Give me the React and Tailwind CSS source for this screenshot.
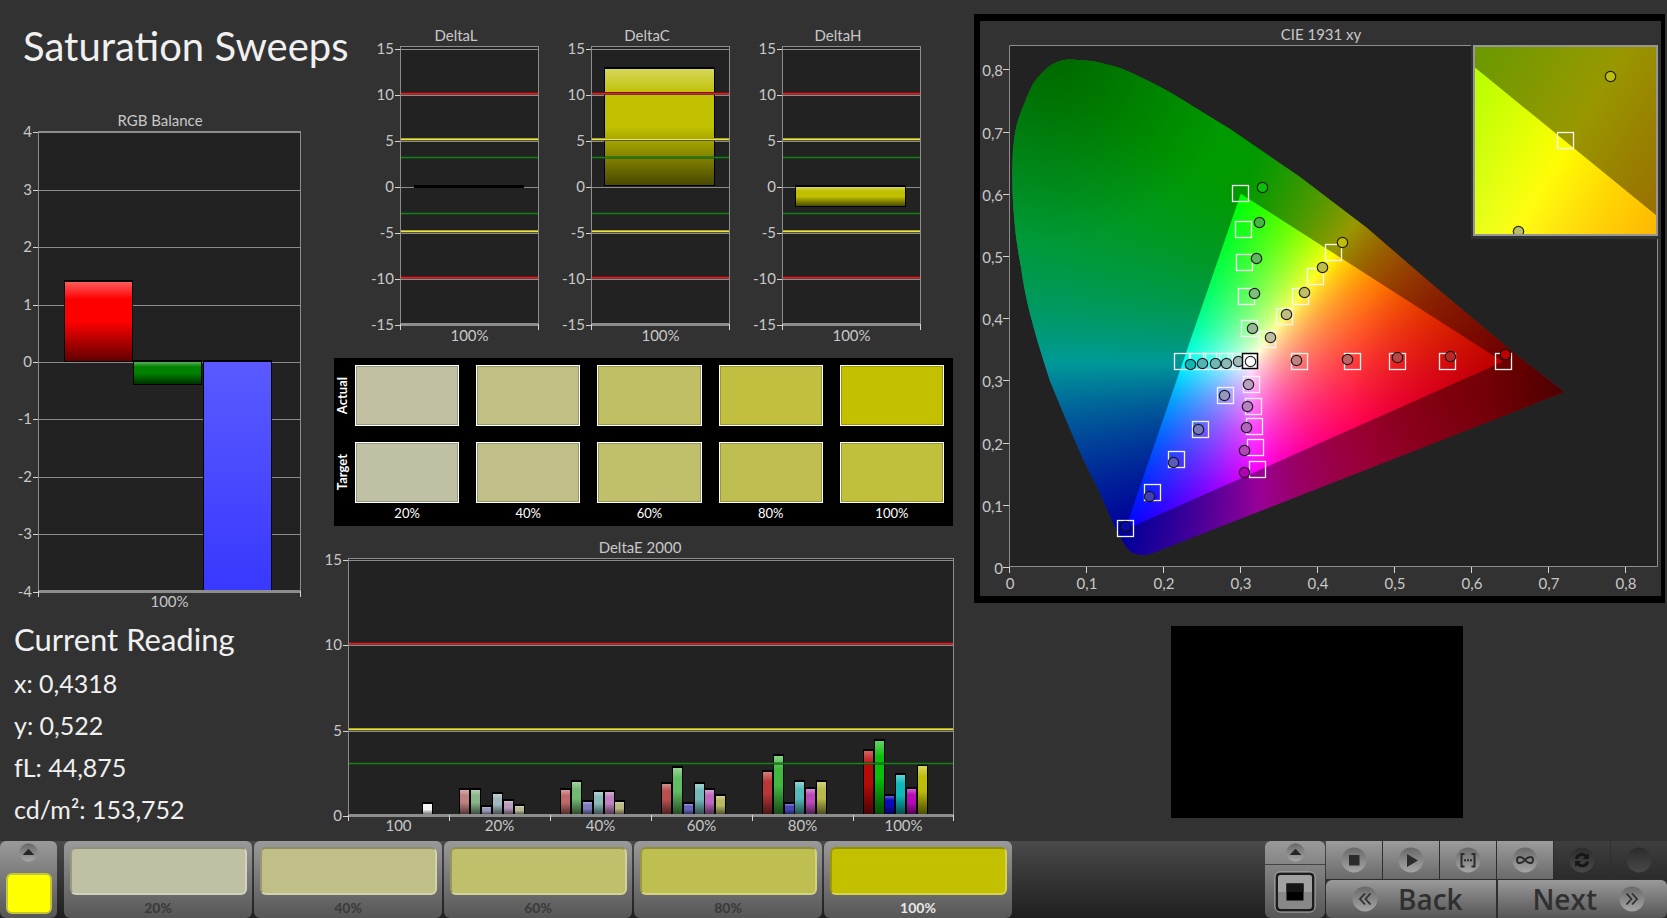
import React, { useState } from 'react';

const LEVELS = ['20%', '40%', '60%', '80%', '100%'];
const ACTUAL = ['#c1c0a2', '#c0bf84', '#c1bf64', '#c2bf40', '#c3c000'];
const TARGET = ['#bfc0a4', '#c0bf88', '#bfbf6c', '#bebf50', '#c0c03c'];

const DELTA_TICKS = [15, 10, 5, 0, -5, -10, -15];
const DELTA_LIMITS = [
  { value: 10, kind: 'red' },
  { value: 5, kind: 'yellow' },
  { value: 3, kind: 'green' },
  { value: -3, kind: 'green' },
  { value: -5, kind: 'yellow' },
  { value: -10, kind: 'red' },
];

// height of each bar in DeltaE units, order: R G B C M Y
const DELTA_E = [
  { label: '20%', values: [1.5, 1.5, 0.5, 1.3, 0.9, 0.6], colors: ['#be8080', '#8cb48c', '#9696be', '#a0b9be', '#b99bb9', '#b9b996'] },
  { label: '40%', values: [1.5, 2.0, 0.8, 1.4, 1.4, 0.8], colors: ['#be6969', '#73b973', '#7d7dbe', '#8cb9b9', '#be82be', '#b9b982'] },
  { label: '60%', values: [1.9, 2.8, 0.7, 1.9, 1.5, 1.2], colors: ['#b95050', '#5fbe5f', '#6464be', '#73b9b9', '#be69be', '#b9b964'] },
  { label: '80%', values: [2.6, 3.5, 0.7, 2.0, 1.6, 2.0], colors: ['#b93737', '#41b941', '#4646b9', '#55b9b9', '#b94bb9', '#b9b94b'] },
  { label: '100%', values: [3.8, 4.4, 1.2, 2.4, 1.6, 2.9], colors: ['#b90a0a', '#0abe0a', '#0a0abe', '#0fb9b9', '#b90ab9', '#bebe0a'] },
];

// ---------- bar charts ----------

function Shade() {
  return (
    <defs>
      <linearGradient id="shade" x1="0" y1="0" x2="0" y2="1">
        <stop offset="0" stopColor="#fff" stopOpacity="0.36" />
        <stop offset="0.22" stopColor="#fff" stopOpacity="0" />
        <stop offset="0.5" stopColor="#000" stopOpacity="0" />
        <stop offset="1" stopColor="#000" stopOpacity="0.62" />
      </linearGradient>
      <linearGradient id="blueBar" x1="0" y1="0" x2="0" y2="1">
        <stop offset="0" stopColor="#5a5aff" />
        <stop offset="1" stopColor="#3838ff" />
      </linearGradient>
    </defs>
  );
}

function Bar({ x, y, width, height, color, flat, line = 2 }) {
  return (
    <g>
      <rect x={x} y={y} width={width} height={height} fill="#000" />
      <rect x={x + line / 2} y={y + line} width={width - line} height={Math.max(0, height - line * 1.5)} fill={color} />
      {!flat && (
        <rect x={x + line / 2} y={y + line} width={width - line} height={Math.max(0, height - line * 1.5)} fill="url(#shade)" />
      )}
    </g>
  );
}

function LimitLine({ x, y, width, kind }) {
  if (kind === 'red') {
    return (
      <g>
        <rect x={x} y={y - 3} width={width} height="1" fill="#7a1010" />
        <rect x={x} y={y - 2} width={width} height="1" fill="#c82828" />
        <rect x={x} y={y - 1} width={width} height="1" fill="#8c3030" />
      </g>
    );
  }
  if (kind === 'yellow') {
    return (
      <g>
        <rect x={x} y={y - 3} width={width} height="1" fill="#a8a42c" />
        <rect x={x} y={y - 2} width={width} height="1" fill="#e8e44a" />
        <rect x={x} y={y - 1} width={width} height="1" fill="#5c5a24" />
      </g>
    );
  }
  return (
    <g>
      <rect x={x} y={y - 3} width={width} height="1" fill="#0f5a0f" fillOpacity="0.5" />
      <rect x={x} y={y - 2} width={width} height="1" fill="#1f7a1f" />
      <rect x={x} y={y - 1} width={width} height="1" fill="#0f5a0f" fillOpacity="0.6" />
    </g>
  );
}

function Chart({ title, titleX, titleY = 17, width, height, frame, zero, unit, ticks, limits = [], groups, labelY, children }) {
  const toY = v => Math.round(zero - v * unit);
  const right = frame.x + frame.width;
  const bottom = frame.y + frame.height;
  return (
    <svg viewBox={`0 0 ${width} ${height}`} className="block h-auto w-full text-[15px]" role="img" aria-label={title}>
      <Shade />
      <text x={titleX} y={titleY} textAnchor="middle" fill="#c8c8c8">{title}</text>
      <rect x={frame.x} y={frame.y} width={frame.width} height={frame.height} fill="#222222" />
      {ticks.map(t => (
        <g key={t}>
          <rect x={frame.x} y={toY(t)} width={frame.width} height="1" fill="#8c8c8c" />
          <rect x={frame.x - 5} y={toY(t)} width="5" height="1" fill="#d4d4d4" />
          <text x={frame.x - 6} y={toY(t) + 5} textAnchor="end" fill="#c8c8c8">{t}</text>
        </g>
      ))}
      {children}
      {limits.map(l => (
        <LimitLine key={l.value} x={frame.x} y={toY(l.value)} width={frame.width} kind={l.kind} />
      ))}
      <rect x={frame.x} y={frame.y} width={frame.width} height="1" fill="#8c8c8c" />
      <rect x={frame.x} y={bottom - 1} width={frame.width} height="2" fill="#8c8c8c" />
      <rect x={frame.x} y={frame.y} width="1" height={frame.height} fill="#8c8c8c" />
      <rect x={right - 1} y={frame.y} width="1" height={frame.height} fill="#8c8c8c" />
      {groups.map((g, i) => {
        const step = frame.width / groups.length;
        return (
          <g key={g}>
            <rect x={Math.round(frame.x + step * i)} y={bottom} width="1" height="6" fill="#d4d4d4" />
            <text x={frame.x + step * (i + 0.5)} y={labelY} textAnchor="middle" fill="#c8c8c8">{g}</text>
          </g>
        );
      })}
      <rect x={right - 1} y={bottom} width="1" height="6" fill="#d4d4d4" />
    </svg>
  );
}

function DeltaChart({ title, children }) {
  return (
    <Chart
      title={title}
      titleX={86}
      width={191}
      height={324}
      frame={{ x: 30, y: 22, width: 139, height: 278 }}
      zero={163}
      unit={9.2}
      ticks={DELTA_TICKS}
      limits={DELTA_LIMITS}
      groups={['100%']}
      labelY={317}
    >
      {children}
    </Chart>
  );
}

function RgbBalance() {
  return (
    <Chart
      title="RGB Balance"
      titleX={160}
      titleY={14}
      width={324}
      height={504}
      frame={{ x: 38, y: 19, width: 263, height: 460 }}
      zero={250}
      unit={57.4}
      ticks={[4, 3, 2, 1, 0, -1, -2, -3, -4]}
      groups={['100%']}
      labelY={495}
    >
      <Bar x={64} y={168} width={69} height={82} color="#ff0000" />
      <Bar x={133} y={248} width={69} height={25} color="#008200" />
      <Bar x={203} y={248} width={69} height={232} color="url(#blueBar)" flat />
    </Chart>
  );
}

function DeltaE() {
  return (
    <Chart
      title="DeltaE 2000"
      titleX={316}
      width={636}
      height={305}
      frame={{ x: 24, y: 22, width: 606, height: 257 }}
      zero={280}
      unit={17.07}
      ticks={[15, 10, 5, 0]}
      limits={DELTA_LIMITS.slice(0, 3)}
      groups={['100', ...DELTA_E.map(g => g.label)]}
      labelY={295}
    >
      <Bar x={98} y={266} width={11} height={14} color="#f4f4f4" />
      {DELTA_E.map((g, i) =>
        g.values.map((v, j) => {
          const top = Math.round(278 - v * 17.07);
          return (
            <Bar key={g.label + j} x={Math.round(135 + i * 100.9 + j * 10.9)} y={top} width={11} height={280 - top} color={g.colors[j]} />
          );
        })
      )}
    </Chart>
  );
}

// ---------- CIE chart ----------

const toX = x => 1009.5 + x * 771;
const toY = y => 567 - y * 622;

const RED = [0.64, 0.33];
const GREEN = [0.3, 0.6];
const BLUE = [0.15, 0.06];

const LOCUS =
  'M1143 555 C1135 555 1131 552 1128 549 C1122 541 1115 527 1115 527 L1097 487 L1083 459 L1067 422 L1050 381 ' +
  'C1043 359 1036 337 1032 321 C1027 303 1023 283 1021 267 C1017 247 1015 230 1014 216 C1012 195 1012 168 1013 151 ' +
  'C1014 140 1015 132 1017 124 C1019 116 1022 109 1025 102 C1027 96 1030 90 1033 84 C1036 79 1040 75 1043 72 ' +
  'C1047 68 1050 65 1055 63 C1062 59 1071 59 1078 60 C1085 60 1091 61 1097 62 C1104 64 1110 65 1117 67 ' +
  'C1125 70 1133 73 1140 77 C1152 82 1162 88 1173 94 L1230 129 L1300 177 L1367 228 L1433 285 L1520 358 L1564 392 ' +
  'L1153 553 Q1148 555 1143 555 Z';

const triangle = [RED, GREEN, BLUE].map(([x, y]) => `${toX(x)} ${toY(y)}`);

// linear RGB from chromaticity, negative parts clipped
function linearRgb(x, y) {
  const z = 1 - x - y;
  return [
    3.2406 * x - 1.5372 * y - 0.4986 * z,
    -0.9689 * x + 1.8758 * y + 0.0415 * z,
    0.0557 * x - 0.204 * y + 1.057 * z,
  ].map(v => Math.max(0, v));
}

// Around a primary the ratio of the other two channels depends on the angle only.
// The darkest of the three gradients in each channel is the brightest RGB of the hue.
function primaryGradient([px, py], channel) {
  const stops = [];
  for (let deg = 0; deg <= 360; deg += 1) {
    const a = (deg * Math.PI) / 180;
    const rgb = linearRgb(px + Math.sin(a) * 0.02 / 0.771, py + Math.cos(a) * 0.02 / 0.622);
    rgb[channel] = 0;
    const max = Math.max(...rgb);
    const c = rgb.map(v => (max < 0.0005 ? 0 : Math.round((v / max) * 255)));
    c[channel] = 255;
    stops.push(`rgb(${c.join(',')}) ${deg}deg`);
  }
  return `conic-gradient(from 0deg at ${toX(px) - 980}px ${toY(py) - 21}px, ${stops.join(',')})`;
}

const GAMUT_BACKGROUND = [
  primaryGradient(RED, 0),
  primaryGradient(GREEN, 1),
  primaryGradient(BLUE, 2),
].join(',');

function Gamut() {
  return (
    <g>
      <foreignObject x="980" y="21" width="681" height="575">
        <div className="h-full w-full bg-blend-darken" style={{ backgroundImage: GAMUT_BACKGROUND }} />
      </foreignObject>
      <path d={`M980 21 H1661 V596 H980 Z M${triangle.join(' L')} Z`} fillRule="evenodd" fill="#000" fillOpacity="0.4" />
      <rect x="980" y="21" width="681" height="575" fill="url(#dimRed)" />
      <rect x="980" y="21" width="681" height="575" fill="url(#dimGreen)" />
    </g>
  );
}

const TARGETS = [
  [1240, 193], [1243, 229], [1244, 262], [1246, 296], [1249, 328],
  [1267, 339], [1284, 316], [1300, 296], [1315, 276], [1333, 252],
  [1182, 361], [1197, 361], [1211, 361], [1224, 361], [1236, 361],
  [1299, 361], [1352, 361], [1397, 361], [1447, 361], [1503, 361],
  [1251, 384], [1253, 406], [1254, 426], [1255, 447], [1257, 469],
  [1225, 395], [1200, 429], [1176, 459], [1152, 492], [1125, 528],
];

const READINGS = [
  [1262, 187, '#0abe0a'], [1259, 222, '#41b941'], [1256, 258, '#5fb95f'], [1254, 293, '#7dbe7d'], [1252, 328, '#96b996'],
  [1270, 337, '#bebea0'], [1286, 314, '#bebe82'], [1304, 292, '#bebe64'], [1322, 267, '#bebe46'], [1342, 242, '#bebe0a'],
  [1190, 364, '#14b4b4'], [1202, 363, '#50b4b4'], [1215, 363, '#6eb9b4'], [1226, 363, '#8cb9b4'], [1238, 361, '#a0b9b9'],
  [1296, 360, '#be8282'], [1347, 359, '#be6464'], [1397, 357, '#b94646'], [1450, 356, '#b92828'], [1505, 354, '#be0000'],
  [1248, 384, '#b9a0be'], [1247, 406, '#b982be'], [1246, 427, '#b464be'], [1244, 450, '#b446b9'], [1244, 472, '#b400b4'],
  [1224, 395, '#9696be'], [1198, 429, '#7878be'], [1173, 462, '#5a5abe'], [1149, 496, '#4141b4'], [1125, 526, '#0a0aaa'],
];

function Target({ x, y, stroke = '#f4f4f4' }) {
  return <rect x={x - 7.5} y={y - 7.5} width="16" height="16" fill="none" stroke={stroke} strokeWidth="1.3" />;
}

function Reading({ x, y, fill }) {
  return <circle cx={x + 0.5} cy={y + 0.5} r="5.2" fill={fill} stroke="#101010" strokeOpacity="0.9" strokeWidth="1.2" />;
}

function CieChart() {
  return (
    <svg viewBox="980 21 681 575" className="block h-auto w-full text-[15px]" role="img" aria-label="CIE 1931 xy">
      <defs>
        <clipPath id="locus"><path d={LOCUS} /></clipPath>
        <radialGradient id="dimRed" gradientUnits="userSpaceOnUse" cx="1560" cy="385" r="210">
          <stop offset="0" stopColor="#000" stopOpacity="0.5" />
          <stop offset="0.35" stopColor="#000" stopOpacity="0.25" />
          <stop offset="1" stopColor="#000" stopOpacity="0" />
        </radialGradient>
        <radialGradient id="dimGreen" gradientUnits="userSpaceOnUse" cx="1050" cy="50" r="190">
          <stop offset="0" stopColor="#000" stopOpacity="0.34" />
          <stop offset="1" stopColor="#000" stopOpacity="0" />
        </radialGradient>
      </defs>
      <text x="1321" y="40" textAnchor="middle" fill="#c8c8c8">CIE 1931 xy</text>
      <rect x="1009" y="45" width="649" height="522" fill="#222222" />
      <g clipPath="url(#locus)"><Gamut /></g>
      <path d="M1009.5 567 V45.5 H1657.5 V566.5 H1009" fill="none" stroke="#8c8c8c" />
      {[0, 1, 2, 3, 4, 5, 6, 7, 8].map(n => {
        const label = n === 0 ? '0' : `0,${n}`;
        return (
          <g key={n}>
            <rect x={Math.round(toX(n / 10)) - 1} y="567" width="1" height="6" fill="#d4d4d4" />
            <text x={Math.round(toX(n / 10))} y="589" textAnchor="middle" fill="#c8c8c8">{label}</text>
            <rect x="1003" y={Math.round(toY(n / 10))} width="6" height="1" fill="#d4d4d4" />
            <text x="1003" y={Math.round(toY(n / 10)) + 7} textAnchor="end" fill="#c8c8c8">{label}</text>
          </g>
        );
      })}

      {TARGETS.map(([x, y]) => <Target key={`${x}-${y}`} x={x} y={y} />)}
      {READINGS.map(([x, y, fill]) => <Reading key={`${x}-${y}`} x={x} y={y} fill={fill} />)}
      <rect x="1242.5" y="353.5" width="15" height="15" fill="#fff" stroke="#000" strokeWidth="1.5" />
      <Reading x={1250} y={361} fill="#ffffff" />

      {/* magnified view around the current reading */}
      <rect x="1471" y="44" width="188" height="195" fill="#323232" />
      <svg x="1474" y="46" width="184" height="190" viewBox="1313.6 237 38.7 31.4" preserveAspectRatio="none">
        <Gamut />
      </svg>
      <svg x="1474" y="46" width="184" height="190" viewBox="1474 46 184 190">
        <Target x={1565} y={140} />
        <Reading x={1610} y={76} fill="#bebe14" />
        <Reading x={1518} y={231} fill="#b9be64" />
      </svg>
      <rect x="1474" y="46" width="183" height="189" fill="none" stroke="#969696" strokeWidth="2" />
    </svg>
  );
}

// ---------- swatch table ----------

function SwatchRow({ name, colors }) {
  return (
    <div className="flex">
      <div className="flex w-[21px] items-center">
        <span className="rotate-180 text-[13px] leading-4 font-bold text-white [writing-mode:vertical-rl]">{name}</span>
      </div>
      <div className="grid flex-1 grid-cols-5 gap-[17px]">
        {colors.map(c => (
          <div key={c} className="h-[61px] border border-white outline outline-1 -outline-offset-2 outline-black/20" style={{ backgroundColor: c }} />
        ))}
      </div>
    </div>
  );
}

function Swatches() {
  return (
    <section className="mt-[10px] mr-[7px] ml-[10px] h-[168px] bg-black pt-[7px] pr-[9px]">
      <SwatchRow name="Actual" colors={ACTUAL} />
      <div className="h-4" />
      <SwatchRow name="Target" colors={TARGET} />
      <div className="grid grid-cols-5 gap-[17px] pl-[21px] text-center text-[13px] leading-5 text-white">
        {LEVELS.map(l => <span key={l}>{l}</span>)}
      </div>
    </section>
  );
}

// ---------- bottom bar ----------

function Disc({ children, dim, size = 26 }) {
  return (
    <svg width={size} height={size} viewBox="0 0 26 26" className="block shrink-0" aria-hidden="true">
      <defs>
        <linearGradient id="disc" x1="0" y1="0" x2="0" y2="1">
          <stop offset="0" stopColor="#686868" />
          <stop offset="1" stopColor="#a6a6a6" />
        </linearGradient>
        <linearGradient id="discDim" x1="0" y1="0" x2="0" y2="1">
          <stop offset="0" stopColor="#2c2c2c" />
          <stop offset="1" stopColor="#484848" />
        </linearGradient>
      </defs>
      <circle cx="13" cy="13" r="12.5" fill={dim ? 'url(#discDim)' : 'url(#disc)'} />
      {children}
    </svg>
  );
}

const UpDisc = () => (
  <Disc size={19}><path d="M5 16.500 L13 8 L21 16.500 Z" fill="#262626" /></Disc>
);

const TRANSPORT = [
  { name: 'Stop', icon: <rect x="8" y="8" width="10.500" height="10.500" fill="#2c2c2c" /> },
  { name: 'Play', icon: <path d="M9 7 L20 13.500 L9 20 Z" fill="#2c2c2c" /> },
  {
    name: 'Read series',
    icon: (
      <g fill="none" stroke="#2c2c2c" strokeWidth="2">
        <path d="M9.500 7 H6.500 V19.500 H9.500 M16.500 7 H19.500 V19.500 H16.500" />
        <path d="M9 13.200 H17" strokeDasharray="2 1" />
      </g>
    ),
  },
  {
    name: 'Continuous',
    icon: <path d="M13 13 C10.500 9.500 5 8.500 5 13 C5 17.500 10.500 16.500 13 13 C15.500 9.500 21 8.500 21 13 C21 17.500 15.500 16.500 13 13 Z" fill="none" stroke="#2c2c2c" strokeWidth="2" />,
  },
  {
    name: 'Refresh',
    dim: true,
    icon: (
      <g fill="none" stroke="#161616" strokeWidth="2.800">
        <path d="M7.500 12 C8 7.500 14 5.500 17.500 9.500" />
        <path d="M18.500 14.500 C18 19 12 20.500 8.500 16.500" />
        <path d="M19.800 6 V12 H14 Z M6.200 20 V14 H12 Z" fill="#161616" stroke="none" />
      </g>
    ),
  },
  { name: 'Record', dim: true, icon: null },
];

const tile = 'bg-linear-to-b from-[#9a9a9a] to-[#565656]';

function TransportButton({ item }) {
  return (
    <button
      type="button"
      aria-label={item.name}
      disabled={item.dim}
      className={`flex flex-1 items-center justify-center ${item.dim ? 'bg-linear-to-b from-[#3e3e3e] to-[#2b2b2b]' : 'bg-linear-to-b from-[#9c9c9c] to-[#6a6a6a]'}`}
    >
      <Disc dim={item.dim}>{item.icon}</Disc>
    </button>
  );
}

function BottomBar() {
  const [selected, setSelected] = useState('100%');
  return (
    <footer className="flex h-[77px] bg-linear-to-b from-[#4a4a4a] to-[#202020]">
      <button type="button" aria-label="Test color" className={`flex w-[57px] flex-col items-center rounded-md pt-[2px] ${tile}`}>
        <UpDisc />
        <span className="mt-[11px] h-[41px] w-[46px] rounded-md border-2 border-[#c4c43c] bg-[#ffff00]" />
      </button>

      <div className="ml-[7px] flex flex-1 gap-[2px]">
        {LEVELS.map((level, i) => (
          <button
            key={level}
            type="button"
            onClick={() => setSelected(level)}
            className={`flex w-[188px] flex-col items-center rounded-md pt-[6px] ${tile}`}
          >
            <span
              className="h-[48px] w-[177px] rounded-md border-2 border-t-black/25 border-r-white/30 border-b-white/30 border-l-black/20"
              style={{ backgroundColor: i === 4 ? ACTUAL[4] : TARGET[i] }}
            />
            <span className={`mt-[3px] text-[14px] leading-5 font-bold ${selected === level ? 'text-[#e8e8e8]' : 'text-[#3a3a3a]'}`}>
              {level}
            </span>
          </button>
        ))}
      </div>

      <button type="button" aria-label="Pattern window" className={`flex w-[60px] flex-col items-center rounded-md pt-[2px] ${tile}`}>
        <UpDisc />
        <span className="mt-[2px] h-px w-full bg-[#444444]" />
        <svg width="42" height="42" viewBox="0 0 42 42" className="mt-[6px]" aria-hidden="true">
          <rect x="1" y="1" width="40" height="40" rx="5" fill="#1c1c1c" stroke="#b4b4b4" />
          <rect x="4" y="4" width="34" height="34" rx="3" fill="#888888" />
          <path d="M4 7 Q4 4 7 4 H35 Q38 4 38 7 V21 H4 Z" fill="#a2a2a2" />
          <rect x="12.500" y="12.500" width="17" height="17" fill="#000" />
          <rect x="12.500" y="12.500" width="17" height="8.500" fill="#161616" />
        </svg>
      </button>

      <div className="ml-px flex w-[341px] flex-col gap-px bg-[#2e2e2e]">
        <div className="flex flex-1 gap-px">
          {TRANSPORT.map(item => <TransportButton key={item.name} item={item} />)}
        </div>
        <div className="grid h-[38px] grid-cols-2 gap-[2px] font-['Open_Sans',sans-serif] text-[28px] leading-[38px] font-semibold text-[#303030]">
          <button type="button" className={`flex items-center gap-5 rounded-l-md pl-[26px] ${tile}`}>
            <Disc><path d="M13 7.500 L8 13 L13 18.500 M18.500 7.500 L13.500 13 L18.500 18.500" fill="none" stroke="#303030" strokeWidth="1.800" /></Disc>
            Back
          </button>
          <button type="button" className={`flex items-center justify-end gap-[22px] rounded-r-md pr-[22px] ${tile}`}>
            Next
            <Disc><path d="M7.500 7.500 L12.500 13 L7.500 18.500 M13 7.500 L18 13 L13 18.500" fill="none" stroke="#303030" strokeWidth="1.800" /></Disc>
          </button>
        </div>
      </div>
    </footer>
  );
}

export default function App() {
  return (
    <div className="flex min-h-screen flex-col bg-[#323232] font-['Lato',sans-serif] text-[#f0f0f0]">
      <main className="grid flex-1 grid-cols-[minmax(0,324fr)_minmax(0,636fr)_minmax(0,707fr)] items-start">
        {/* RGB balance and current reading */}
        <section>
          <h1 className="h-[112px] pt-[18px] pl-[23px] text-[40px] leading-[56px] whitespace-nowrap">Saturation Sweeps</h1>
          <RgbBalance />
          <div className="pl-[14px] text-[25px] leading-[42px]">
            <h2 className="text-[31px] leading-[46px]">Current Reading</h2>
            <p>x: 0,4318</p>
            <p>y: 0,522</p>
            <p>fL: 44,875</p>
            <p>cd/m²: 153,752</p>
          </div>
        </section>

        {/* Delta charts and swatches */}
        <section className="pt-6">
          <div className="grid grid-cols-3 pr-[17px] pl-[46px]">
            <DeltaChart title="DeltaL">
              <rect x="44" y="161" width="110" height="3" fill="#000" />
            </DeltaChart>
            <DeltaChart title="DeltaC">
              <Bar x={43} y={43} width={111} height={119} color="#c0c000" />
            </DeltaChart>
            <DeltaChart title="DeltaH">
              <Bar x={43} y={161} width={111} height={22} color="#c0c000" />
            </DeltaChart>
          </div>
          <Swatches />
          <div className="mt-[10px]">
            <DeltaE />
          </div>
        </section>

        {/* CIE diagram */}
        <section className="pt-[14px] pr-[2px] pl-[14px]">
          <div className="border-x-[6px] border-y-[7px] border-r-[4px] border-black">
            <CieChart />
          </div>
          <div className="mt-[23px] flex justify-center pr-[5px]">
            <div className="h-[192px] w-[292px] bg-black" />
          </div>
        </section>
      </main>
      <BottomBar />
    </div>
  );
}
